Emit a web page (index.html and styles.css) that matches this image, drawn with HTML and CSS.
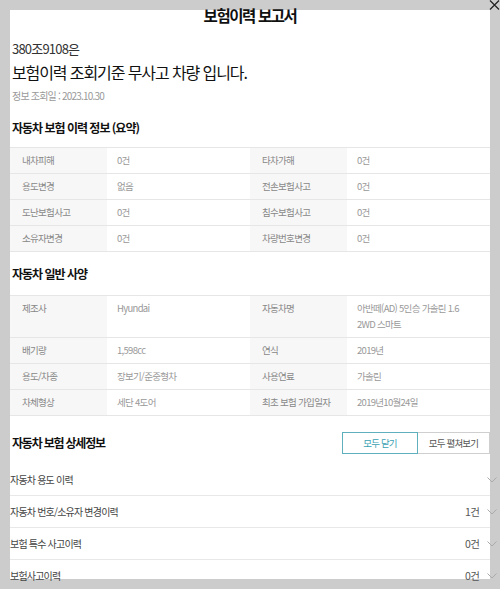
FILE: index.html
```html
<!DOCTYPE html>
<html lang="ko">
<head>
  <meta charset="UTF-8" />
  <meta name="viewport" content="width=device-width, initial-scale=1.0" />
  <title>보험이력 보고서</title>
  <link rel="stylesheet" href="styles.css">
</head>
<body>
  <div class="modal">
    <button class="close-btn" type="button" aria-label="닫기">
      <svg width="11" height="10" viewBox="0 0 11 10"><path d="M1 0.5 L10 9.5 M10 0.5 L1 9.5" stroke="#222" stroke-width="1.2" fill="none"/></svg>
    </button>

    <h1 class="report-title">보험이력 보고서</h1>

    <p class="car-number">380조9108은</p>
    <p class="headline">보험이력 조회기준 무사고 차량 입니다.</p>
    <p class="query-date">정보 조회일 : 2023.10.30</p>

    <h2 class="section-title first">자동차 보험 이력 정보 (요약)</h2>
    <table class="info-table">
      <colgroup><col class="c-label"><col><col class="c-label"><col></colgroup>
      <tr><th>내차피해</th><td>0건</td><th>타차가해</th><td>0건</td></tr>
      <tr><th>용도변경</th><td>없음</td><th>전손보험사고</th><td>0건</td></tr>
      <tr><th>도난보험사고</th><td>0건</td><th>침수보험사고</th><td>0건</td></tr>
      <tr><th>소유자변경</th><td>0건</td><th>차량번호변경</th><td>0건</td></tr>
    </table>

    <h2 class="section-title">자동차 일반 사양</h2>
    <table class="info-table">
      <colgroup><col class="c-label"><col><col class="c-label"><col></colgroup>
      <tr><th>제조사</th><td>Hyundai</td><th>자동차명</th><td>아반떼(AD) 5인승 가솔린 1.6<br>2WD 스마트</td></tr>
      <tr><th>배기량</th><td>1,598cc</td><th>연식</th><td>2019년</td></tr>
      <tr><th>용도/차종</th><td>장보기/준중형차</td><th>사용연료</th><td>가솔린</td></tr>
      <tr><th>차체형상</th><td>세단 4도어</td><th>최초 보험 가입일자</th><td>2019년10월24일</td></tr>
    </table>

    <div class="detail-head">
      <h2 class="section-title">자동차 보험 상세정보</h2>
      <div class="toggle-group">
        <button type="button" class="toggle-btn active">모두 닫기</button>
        <button type="button" class="toggle-btn">모두 펼쳐보기</button>
      </div>
    </div>

    <ul class="accordion">
      <li class="acc-row"><span class="acc-name">자동차 용도 이력</span><span class="acc-count"></span><svg class="chev" width="10" height="6" viewBox="0 0 10 6"><path d="M0.5 0.5 L5 5 L9.5 0.5" stroke="#aaa" fill="none"/></svg></li>
      <li class="acc-row"><span class="acc-name">자동차 번호/소유자 변경이력</span><span class="acc-count">1건</span><svg class="chev" width="10" height="6" viewBox="0 0 10 6"><path d="M0.5 0.5 L5 5 L9.5 0.5" stroke="#aaa" fill="none"/></svg></li>
      <li class="acc-row"><span class="acc-name">보험 특수 사고이력</span><span class="acc-count">0건</span><svg class="chev" width="10" height="6" viewBox="0 0 10 6"><path d="M0.5 0.5 L5 5 L9.5 0.5" stroke="#aaa" fill="none"/></svg></li>
      <li class="acc-row"><span class="acc-name">보험사고이력</span><span class="acc-count">0건</span><svg class="chev" width="10" height="6" viewBox="0 0 10 6"><path d="M0.5 0.5 L5 5 L9.5 0.5" stroke="#aaa" fill="none"/></svg></li>
    </ul>
  </div>
</body>
</html>
```

FILE: styles.css
```css
html, body { margin: 0; padding: 0; }
body { background: #cccccc; font-family: "Noto Sans CJK KR", sans-serif; color: #111; padding: 10px; height: 589px; box-sizing: border-box; overflow: hidden; }

.modal { position: relative; background: #fff; width: 480px; height: 569px; }
.close-btn { position: absolute; top: -10px; right: -10px; width: 11px; height: 10px; padding: 0; border: none; background: none; display: block; }
.close-btn svg { display: block; }

.report-title { margin: 0; position: relative; top: -5px; height: 20px; line-height: 20px; text-align: center; font-size: 15.5px; font-weight: bold; letter-spacing: -1.4px; }

.car-number { margin: 9px 0 0; padding-left: 2px; line-height: 20px; font-size: 13px; color: #333; letter-spacing: -0.8px; }
.headline { margin: 1px 0 0; padding-left: 2px; line-height: 24px; font-size: 16px; letter-spacing: -1.1px; }
.query-date { margin: 5px 0 0; padding-left: 2px; line-height: 14px; font-size: 10px; color: #999; letter-spacing: -0.8px; }

.section-title { margin: 14px 0 13px; padding-left: 2px; line-height: 16px; font-size: 12px; font-weight: bold; letter-spacing: -1px; }
.section-title.first { margin-top: 17px; margin-bottom: 11px; }

.info-table { width: 480px; border-collapse: collapse; table-layout: fixed; font-size: 9.5px; letter-spacing: -0.7px; }
.info-table .c-label { width: 97px; }
.info-table th, .info-table td { border-top: 1px solid #e6e6e6; border-bottom: 1px solid #e6e6e6; padding: 4px 0 5px; line-height: 16px; text-align: left; vertical-align: top; font-weight: normal; }
.info-table th { background: #f7f7f7; color: #888; padding-left: 12px; }
.info-table td { color: #999; padding-left: 10px; }

.detail-head { display: flex; align-items: center; justify-content: space-between; margin-top: 16px; height: 22px; }
.detail-head .section-title { margin: 0; letter-spacing: -1.2px; }
.toggle-group { display: flex; }
.toggle-btn { height: 22px; padding: 0; background: #fff; border: 1px solid #cfcfcf; border-left: none; font-family: inherit; font-size: 9.5px; color: #555; letter-spacing: -0.8px; width: 72px; }
.toggle-btn.active { width: 76px; border: 1px solid #5fb0bf; color: #3a9fb3; }

.accordion { list-style: none; margin: 10px 0 0; padding: 0; }
.acc-row { display: flex; align-items: center; height: 31px; border-bottom: 1px solid #e8e8e8; font-size: 10px; letter-spacing: -0.8px; }
.acc-name { flex: 1; color: #444; }
.acc-count { color: #555; font-size: 10.5px; }
.chev { margin: 0 -7px 0 8px; }
```
